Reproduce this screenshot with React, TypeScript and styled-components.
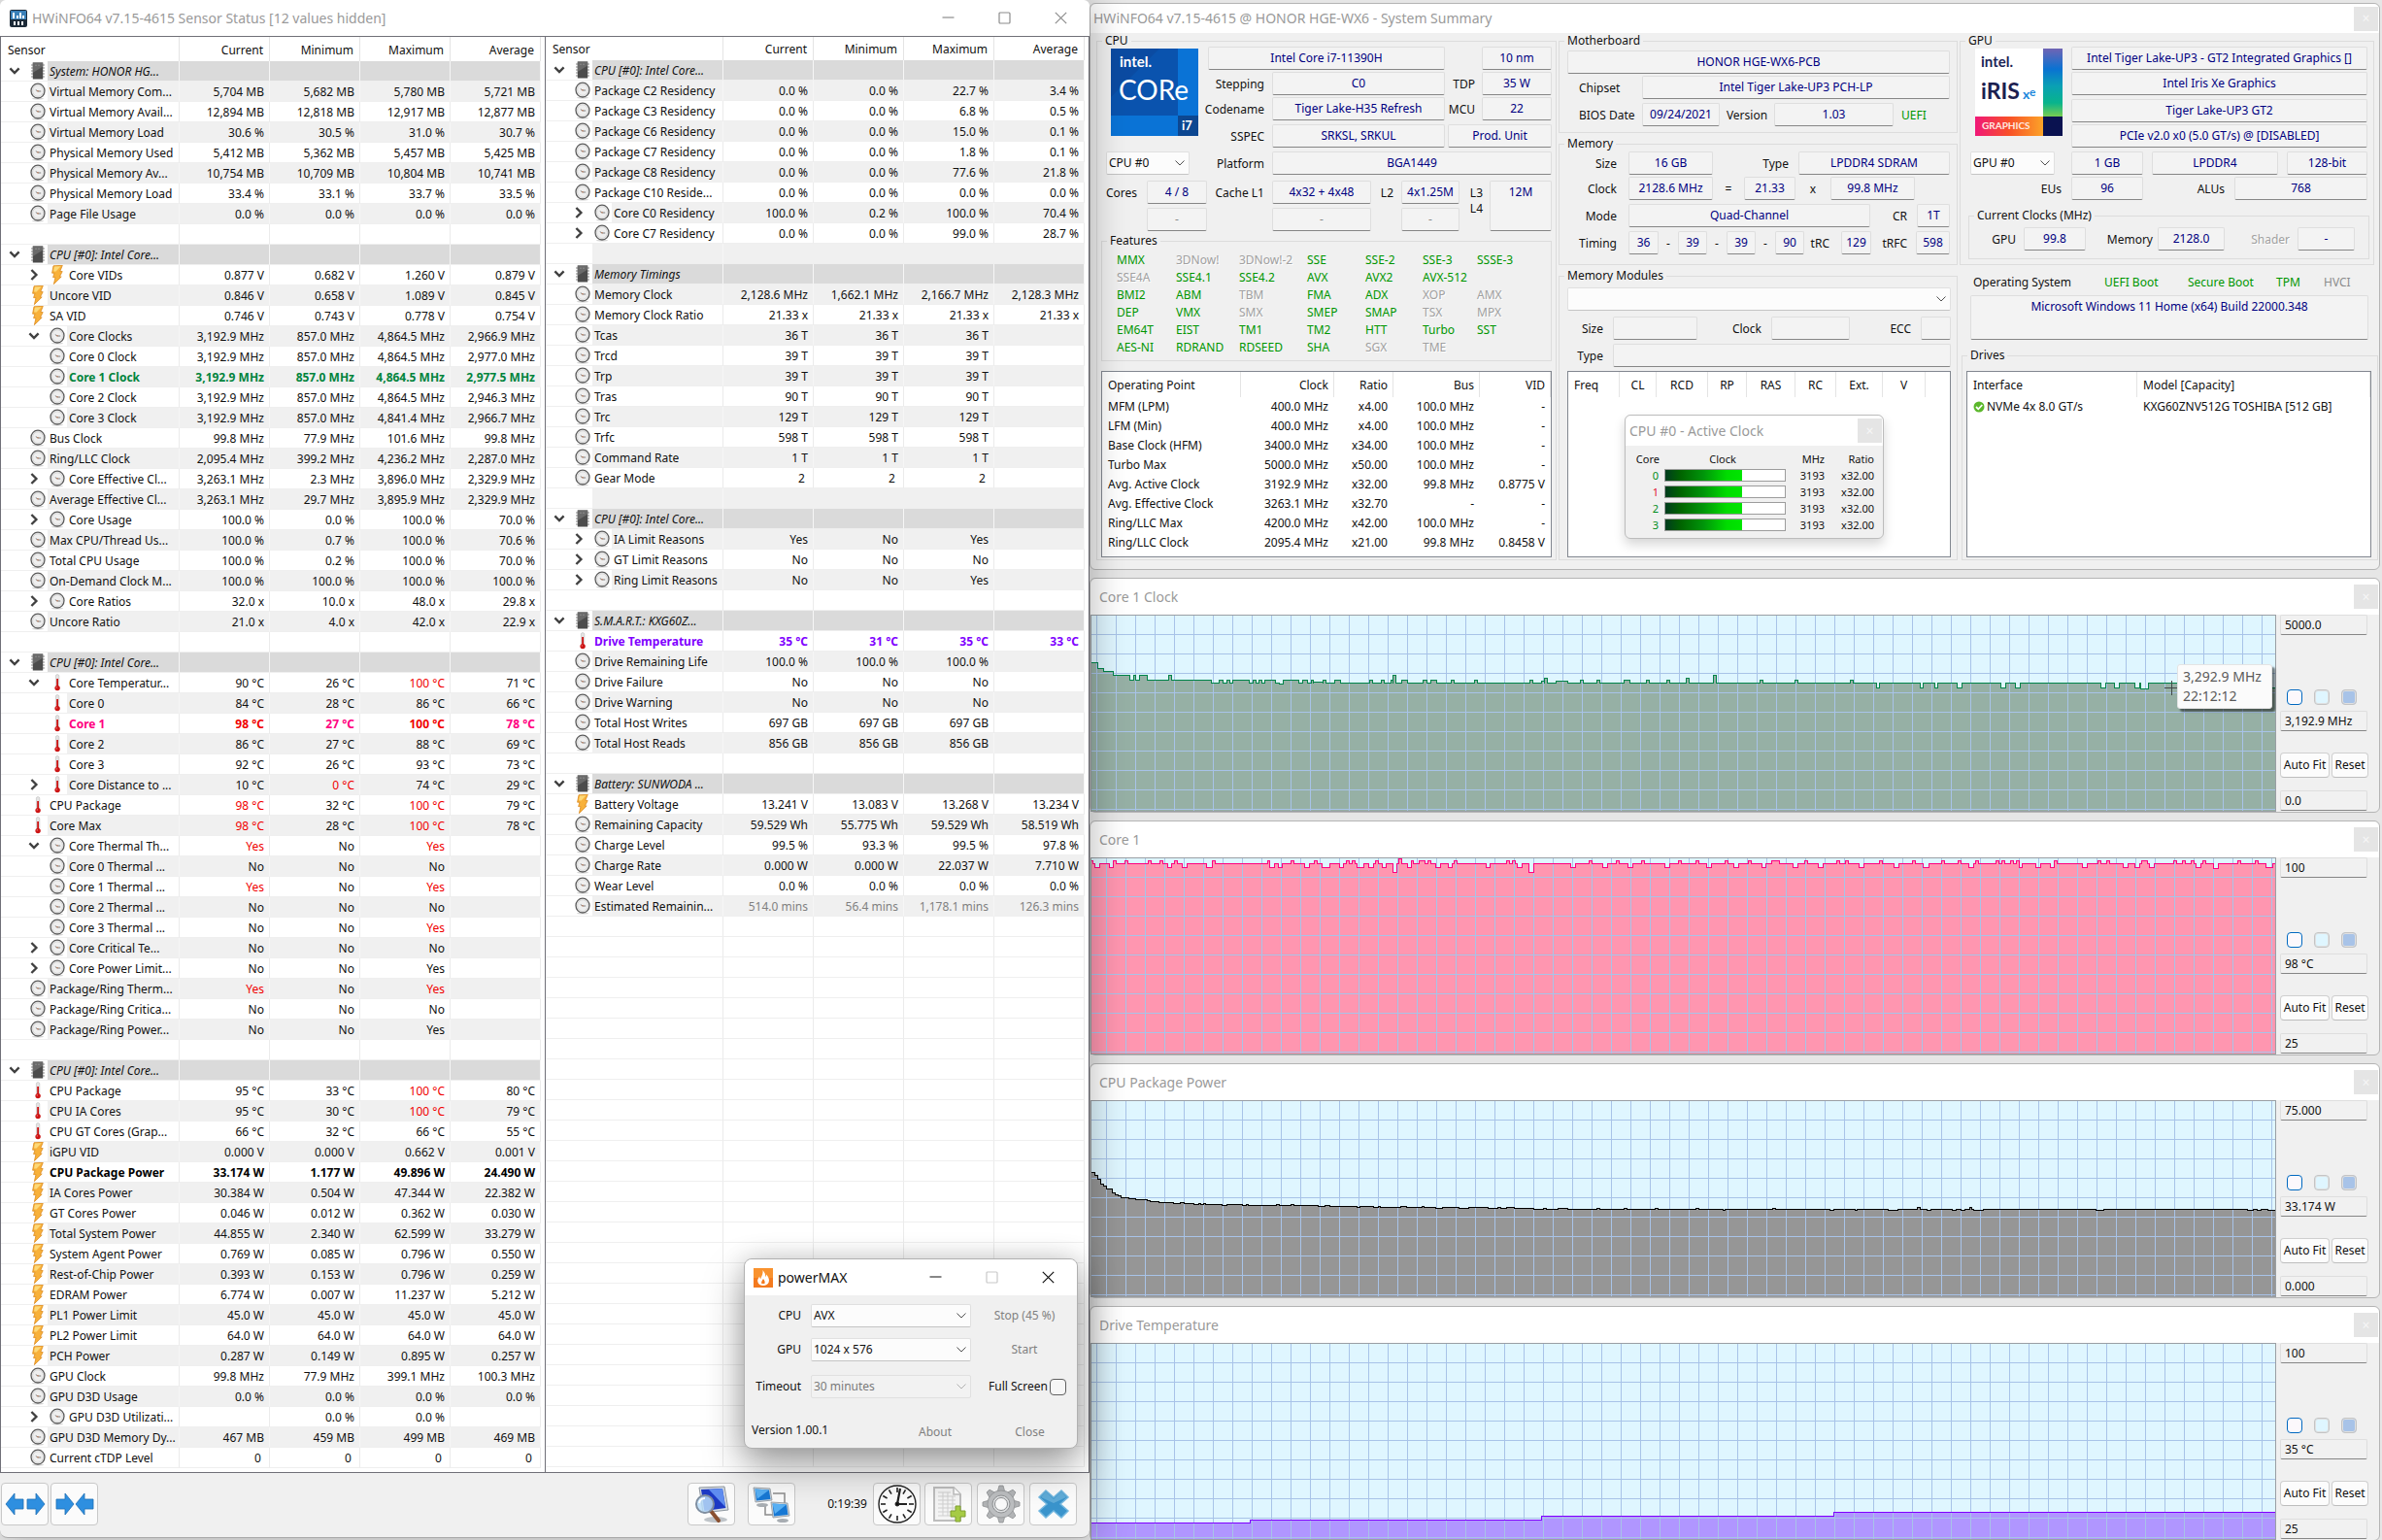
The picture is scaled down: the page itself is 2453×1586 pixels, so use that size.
import React from "react";
import styled, { createGlobalStyle, css } from "styled-components";

const INK = "#101010";
const NAVY = "#000080";
const GREEN = "#009600";
const RED = "#f00000";
const MUTED = "#a0a0a0";

const GlobalStyle = createGlobalStyle`
  * { box-sizing: border-box; }
  body {
    margin: 0;
    background: #e6e6e6;
    color: ${INK};
    font: 12px/20px "Noto Sans", "Open Sans", sans-serif;
  }
  button, input, select, output { font: inherit; color: inherit; margin: 0; }
  button { padding: 0; cursor: default; }
`;

/* ---------- desktop and window chrome ---------- */

const Desktop = styled.main`
  display: grid;
  grid-template-columns: minmax(0, 1122fr) minmax(0, 1329fr);
  align-items: start;
  padding-right: 2px;
  height: 100vh;
  overflow: hidden;
`;

const SensorWindow = styled.section`
  position: relative;
  z-index: 1;
  background: #f0f0f0;
  border-radius: 8px;
  border-bottom: 1px solid #a8a8a8;
  box-shadow: 4px 0 36px rgba(0, 0, 0, 0.26);
`;

const RightColumn = styled.div`
  display: flex;
  flex-direction: column;
  gap: 8px;
  padding-top: 3px;
`;

const ToolWindow = styled.section`
  border: 1px solid #b4b4b4;
  border-radius: 6px;
  background: #f0f0f0;
`;

const TitleBar = styled.header<{ $h: number; $pad: number }>`
  display: flex;
  align-items: center;
  height: ${(p) => p.$h}px;
  padding: 0 1px 0 ${(p) => p.$pad}px;
  background: #fff;
  border-radius: 6px 6px 0 0;
`;

const Title = styled.h2<{ $dark?: boolean }>`
  flex: 1;
  margin: 0;
  font-size: 14px;
  font-weight: 400;
  white-space: nowrap;
  color: ${(p) => (p.$dark ? "#111" : "#9a9a9a")};
`;

const FadedClose = styled.button`
  width: 25px;
  height: 25px;
  border: 0;
  background: #e5e5e5;
  color: #f6f6f6;
  font-size: 14px;
  line-height: 22px;
`;

const Caption = styled.button<{ $w: number }>`
  display: grid;
  place-items: center;
  width: ${(p) => p.$w}px;
  height: 30px;
  border: 0;
  background: none;
`;

type CaptionKind = "min" | "max" | "close";
const CaptionGlyph = ({ kind, color }: { kind: CaptionKind; color: string }) => (
  <svg width="13" height="13" viewBox="0 0 13 13" fill="none" stroke={color} strokeWidth="1.2">
    {kind === "min" && <path d="M.5 6h12" />}
    {kind === "max" && <rect x="1" y="1" width="11" height="11" rx="1" />}
    {kind === "close" && <path d="M.8.8l11.4 11.4M12.2.8L.8 12.2" />}
  </svg>
);

/* ---------- sensor icons ---------- */

type IconKind = "gauge" | "bolt" | "temp" | "chip";

const SensorIcon = ({ kind }: { kind: IconKind }) => {
  if (kind === "gauge")
    return (
      <svg width="16" height="18" viewBox="0 0 16 18">
        <ellipse cx="8" cy="16.6" rx="6" ry="1" fill="#d4d4d4" />
        <ellipse cx="8" cy="8.6" rx="7" ry="7.4" fill="#efefef" stroke="#5c5c5c" strokeWidth="1.3" />
        <ellipse cx="8" cy="8.6" rx="5.4" ry="5.8" fill="none" stroke="#d0d0d0" strokeWidth=".8" />
        <path d="M5.8 7.6L8 9h3.2" stroke="#707070" strokeWidth=".9" fill="none" />
        <circle cx="8" cy="8.8" r=".7" fill="#c87850" />
      </svg>
    );
  if (kind === "bolt")
    return (
      <svg width="12" height="20" viewBox="0 0 12 20">
        <path d="M2 .8L11.3.3 8.8 6.4l2.4.2L8.4 12h1.8L2.4 19.6 4 12.6H1.6L3 8.2H.6z" fill="#f8b13a" stroke="#dc8a1e" strokeWidth=".8" />
        <path d="M3 1.6l6.6-.3-5 5.2H2z" fill="#fdd978" />
      </svg>
    );
  if (kind === "temp")
    return (
      <svg width="8" height="18" viewBox="0 0 8 18">
        <rect x="2.4" y=".6" width="3.4" height="12.6" rx="1.6" fill="#e4e4e4" stroke="#bdbdbd" strokeWidth=".6" />
        <path d="M4.1 5v8" stroke="#cc1414" strokeWidth="1.8" />
        <circle cx="4.1" cy="14.6" r="2.7" fill="#cc1414" />
        <circle cx="3.3" cy="13.9" r=".7" fill="#f08080" />
      </svg>
    );
  return (
    <svg width="14" height="18" viewBox="0 0 14 18">
      <path d="M0 3h14M0 6h14M0 9h14M0 12h14M0 15h14" stroke="#8a8a8a" strokeWidth="1.2" />
      <rect x="1.8" y=".5" width="10.4" height="17" fill="#4c4c4c" />
      <path d="M1.8.5h10.4v4L1.8 11z" fill="#6a6a6a" />
      <path d="M4 3.2h6" stroke="#8c8c8c" strokeDasharray="2 1" />
    </svg>
  );
};

const Expander = ({ open }: { open: boolean }) => (
  <svg width="12" height="12" viewBox="0 0 12 12" fill="none" stroke="#404040" strokeWidth="2.4">
    {open ? <path d="M1.4 3.4L6 8l4.6-4.6" /> : <path d="M3.4 1L8.4 6l-5 5" />}
  </svg>
);

/* ---------- sensor tables ---------- */

type Tone = "green" | "pink" | "black" | "purple" | "dim";
type Row = {
  icon?: IconKind;
  level?: 0 | 1;
  open?: boolean;
  head?: boolean;
  name?: string;
  vals?: string[];
  tone?: Tone;
};

const toneColor: Record<Tone, string> = {
  green: "#00843c",
  pink: "#ff0080",
  black: "#000",
  purple: "#8000ff",
  dim: INK,
};

const head = (name: string): Row => ({ icon: "chip", head: true, open: true, name });
const blank: Row = {};
const row = (icon: IconKind, name: string, vals: string, extra: Partial<Row> = {}): Row => ({
  icon,
  name,
  vals: vals.split("|"),
  ...extra,
});
const sub: Partial<Row> = { level: 1 };
const shut: Partial<Row> = { level: 1, open: false };
const wide: Partial<Row> = { level: 1, open: true };

/* A leading "!" marks a reading beyond its limit. */
const leftRows: Row[] = [
  head("System: HONOR HG..."),
  row("gauge", "Virtual Memory Com...", "5,704 MB|5,682 MB|5,780 MB|5,721 MB"),
  row("gauge", "Virtual Memory Avail...", "12,894 MB|12,818 MB|12,917 MB|12,877 MB"),
  row("gauge", "Virtual Memory Load", "30.6 %|30.5 %|31.0 %|30.7 %"),
  row("gauge", "Physical Memory Used", "5,412 MB|5,362 MB|5,457 MB|5,425 MB"),
  row("gauge", "Physical Memory Av...", "10,754 MB|10,709 MB|10,804 MB|10,741 MB"),
  row("gauge", "Physical Memory Load", "33.4 %|33.1 %|33.7 %|33.5 %"),
  row("gauge", "Page File Usage", "0.0 %|0.0 %|0.0 %|0.0 %"),
  blank,
  head("CPU [#0]: Intel Core..."),
  row("bolt", "Core VIDs", "0.877 V|0.682 V|1.260 V|0.879 V", shut),
  row("bolt", "Uncore VID", "0.846 V|0.658 V|1.089 V|0.845 V"),
  row("bolt", "SA VID", "0.746 V|0.743 V|0.778 V|0.754 V"),
  row("gauge", "Core Clocks", "3,192.9 MHz|857.0 MHz|4,864.5 MHz|2,966.9 MHz", wide),
  row("gauge", "Core 0 Clock", "3,192.9 MHz|857.0 MHz|4,864.5 MHz|2,977.0 MHz", sub),
  row("gauge", "Core 1 Clock", "3,192.9 MHz|857.0 MHz|4,864.5 MHz|2,977.5 MHz", { level: 1, tone: "green" }),
  row("gauge", "Core 2 Clock", "3,192.9 MHz|857.0 MHz|4,864.5 MHz|2,946.3 MHz", sub),
  row("gauge", "Core 3 Clock", "3,192.9 MHz|857.0 MHz|4,841.4 MHz|2,966.7 MHz", sub),
  row("gauge", "Bus Clock", "99.8 MHz|77.9 MHz|101.6 MHz|99.8 MHz"),
  row("gauge", "Ring/LLC Clock", "2,095.4 MHz|399.2 MHz|4,236.2 MHz|2,287.0 MHz"),
  row("gauge", "Core Effective Cl...", "3,263.1 MHz|2.3 MHz|3,896.0 MHz|2,329.9 MHz", shut),
  row("gauge", "Average Effective Cl...", "3,263.1 MHz|29.7 MHz|3,895.9 MHz|2,329.9 MHz"),
  row("gauge", "Core Usage", "100.0 %|0.0 %|100.0 %|70.0 %", shut),
  row("gauge", "Max CPU/Thread Us...", "100.0 %|0.7 %|100.0 %|70.6 %"),
  row("gauge", "Total CPU Usage", "100.0 %|0.2 %|100.0 %|70.0 %"),
  row("gauge", "On-Demand Clock M...", "100.0 %|100.0 %|100.0 %|100.0 %"),
  row("gauge", "Core Ratios", "32.0 x|10.0 x|48.0 x|29.8 x", shut),
  row("gauge", "Uncore Ratio", "21.0 x|4.0 x|42.0 x|22.9 x"),
  blank,
  head("CPU [#0]: Intel Core..."),
  row("temp", "Core Temperatur...", "90 °C|26 °C|!100 °C|71 °C", wide),
  row("temp", "Core 0", "84 °C|28 °C|86 °C|66 °C", sub),
  row("temp", "Core 1", "!98 °C|27 °C|!100 °C|78 °C", { level: 1, tone: "pink" }),
  row("temp", "Core 2", "86 °C|27 °C|88 °C|69 °C", sub),
  row("temp", "Core 3", "92 °C|26 °C|93 °C|73 °C", sub),
  row("temp", "Core Distance to ...", "10 °C|!0 °C|74 °C|29 °C", shut),
  row("temp", "CPU Package", "!98 °C|32 °C|!100 °C|79 °C"),
  row("temp", "Core Max", "!98 °C|28 °C|!100 °C|78 °C"),
  row("gauge", "Core Thermal Th...", "!Yes|No|!Yes|", wide),
  row("gauge", "Core 0 Thermal ...", "No|No|No|", sub),
  row("gauge", "Core 1 Thermal ...", "!Yes|No|!Yes|", sub),
  row("gauge", "Core 2 Thermal ...", "No|No|No|", sub),
  row("gauge", "Core 3 Thermal ...", "No|No|!Yes|", sub),
  row("gauge", "Core Critical Te...", "No|No|No|", shut),
  row("gauge", "Core Power Limit...", "No|No|Yes|", shut),
  row("gauge", "Package/Ring Therm...", "!Yes|No|!Yes|"),
  row("gauge", "Package/Ring Critica...", "No|No|No|"),
  row("gauge", "Package/Ring Power...", "No|No|Yes|"),
  blank,
  head("CPU [#0]: Intel Core..."),
  row("temp", "CPU Package", "95 °C|33 °C|!100 °C|80 °C"),
  row("temp", "CPU IA Cores", "95 °C|30 °C|!100 °C|79 °C"),
  row("temp", "CPU GT Cores (Grap...", "66 °C|32 °C|66 °C|55 °C"),
  row("bolt", "iGPU VID", "0.000 V|0.000 V|0.662 V|0.001 V"),
  row("bolt", "CPU Package Power", "33.174 W|1.177 W|49.896 W|24.490 W", { tone: "black" }),
  row("bolt", "IA Cores Power", "30.384 W|0.504 W|47.344 W|22.382 W"),
  row("bolt", "GT Cores Power", "0.046 W|0.012 W|0.362 W|0.030 W"),
  row("bolt", "Total System Power", "44.855 W|2.340 W|62.599 W|33.279 W"),
  row("bolt", "System Agent Power", "0.769 W|0.085 W|0.796 W|0.550 W"),
  row("bolt", "Rest-of-Chip Power", "0.393 W|0.153 W|0.796 W|0.259 W"),
  row("bolt", "EDRAM Power", "6.774 W|0.007 W|11.237 W|5.212 W"),
  row("bolt", "PL1 Power Limit", "45.0 W|45.0 W|45.0 W|45.0 W"),
  row("bolt", "PL2 Power Limit", "64.0 W|64.0 W|64.0 W|64.0 W"),
  row("bolt", "PCH Power", "0.287 W|0.149 W|0.895 W|0.257 W"),
  row("gauge", "GPU Clock", "99.8 MHz|77.9 MHz|399.1 MHz|100.3 MHz"),
  row("gauge", "GPU D3D Usage", "0.0 %|0.0 %|0.0 %|0.0 %"),
  row("gauge", "GPU D3D Utilizati...", "|0.0 %|0.0 %|", shut),
  row("gauge", "GPU D3D Memory Dy...", "467 MB|459 MB|499 MB|469 MB"),
  row("gauge", "Current cTDP Level", "0 |0 |0 |0 "),
];

const rightRows: Row[] = [
  head("CPU [#0]: Intel Core..."),
  row("gauge", "Package C2 Residency", "0.0 %|0.0 %|22.7 %|3.4 %"),
  row("gauge", "Package C3 Residency", "0.0 %|0.0 %|6.8 %|0.5 %"),
  row("gauge", "Package C6 Residency", "0.0 %|0.0 %|15.0 %|0.1 %"),
  row("gauge", "Package C7 Residency", "0.0 %|0.0 %|1.8 %|0.1 %"),
  row("gauge", "Package C8 Residency", "0.0 %|0.0 %|77.6 %|21.8 %"),
  row("gauge", "Package C10 Reside...", "0.0 %|0.0 %|0.0 %|0.0 %"),
  row("gauge", "Core C0 Residency", "100.0 %|0.2 %|100.0 %|70.4 %", shut),
  row("gauge", "Core C7 Residency", "0.0 %|0.0 %|99.0 %|28.7 %", shut),
  blank,
  head("Memory Timings"),
  row("gauge", "Memory Clock", "2,128.6 MHz|1,662.1 MHz|2,166.7 MHz|2,128.3 MHz"),
  row("gauge", "Memory Clock Ratio", "21.33 x|21.33 x|21.33 x|21.33 x"),
  row("gauge", "Tcas", "36 T|36 T|36 T|"),
  row("gauge", "Trcd", "39 T|39 T|39 T|"),
  row("gauge", "Trp", "39 T|39 T|39 T|"),
  row("gauge", "Tras", "90 T|90 T|90 T|"),
  row("gauge", "Trc", "129 T|129 T|129 T|"),
  row("gauge", "Trfc", "598 T|598 T|598 T|"),
  row("gauge", "Command Rate", "1 T|1 T|1 T|"),
  row("gauge", "Gear Mode", "2 |2 |2 |"),
  blank,
  head("CPU [#0]: Intel Core..."),
  row("gauge", "IA Limit Reasons", "Yes|No|Yes|", shut),
  row("gauge", "GT Limit Reasons", "No|No|No|", shut),
  row("gauge", "Ring Limit Reasons", "No|No|Yes|", shut),
  blank,
  head("S.M.A.R.T.: KXG60Z..."),
  row("temp", "Drive Temperature", "35 °C|31 °C|35 °C|33 °C", { tone: "purple" }),
  row("gauge", "Drive Remaining Life", "100.0 %|100.0 %|100.0 %|"),
  row("gauge", "Drive Failure", "No|No|No|"),
  row("gauge", "Drive Warning", "No|No|No|"),
  row("gauge", "Total Host Writes", "697 GB|697 GB|697 GB|"),
  row("gauge", "Total Host Reads", "856 GB|856 GB|856 GB|"),
  blank,
  head("Battery: SUNWODA ..."),
  row("bolt", "Battery Voltage", "13.241 V|13.083 V|13.268 V|13.234 V"),
  row("gauge", "Remaining Capacity", "59.529 Wh|55.775 Wh|59.529 Wh|58.519 Wh"),
  row("gauge", "Charge Level", "99.5 %|93.3 %|99.5 %|97.8 %"),
  row("gauge", "Charge Rate", "0.000 W|0.000 W|22.037 W|7.710 W"),
  row("gauge", "Wear Level", "0.0 %|0.0 %|0.0 %|0.0 %"),
  row("gauge", "Estimated Remainin...", "514.0 mins|56.4 mins|1,178.1 mins|126.3 mins", { tone: "dim" }),
];
const contentLength = rightRows.length;
const paddedRightRows = [...rightRows, ...Array.from({ length: leftRows.length - contentLength }, () => blank)];

const TablePair = styled.div`
  display: grid;
  grid-template-columns: 1fr 1fr;
  border-top: 1px solid #707078;
  border-bottom: 1px solid #707078;
`;

const TableBox = styled.div`
  padding: 0 4px 4px 0;
  background: #fff;
  border-left: 1px solid #707078;
  &:last-child { border-right: 1px solid #606068; }
`;

const SensorTable = styled.table`
  width: 100%;
  table-layout: fixed;
  border-collapse: separate;
  border-spacing: 0;
`;

const NameCol = styled.col``;
const ValueCol = styled.col`
  width: 93px;
`;

const HeadCell = styled.th<{ $first?: boolean; $h: number }>`
  height: ${(p) => p.$h}px;
  padding: 2px 6px 0 7px;
  border-right: 1px solid #e4e4e4;
  font-weight: 400;
  text-align: ${(p) => (p.$first ? "left" : "right")};
`;

type Shade = "head" | "odd" | "even";
const shadeBg: Record<Shade, string> = { head: "#dadada", odd: "#f0f0f0", even: "#fff" };

const ValueCell = styled.td<{ $shade: Shade; $plain?: boolean; $color?: string; $bold?: boolean }>`
  height: 21px;
  padding: 2px 5px 0 0;
  border-right: 1px solid ${(p) => (p.$plain ? "#f0f0f0" : p.$shade === "even" ? "#ebebeb" : "#f6f6f6")};
  border-bottom: 1px solid #efefef;
  background: ${(p) => shadeBg[p.$shade]};
  color: ${(p) => p.$color ?? "inherit"};
  font-weight: ${(p) => (p.$bold ? 700 : 400)};
  text-align: right;
  white-space: pre;
  line-height: 18px;
`;

const NameCell = styled.td<{ $shade: Shade }>`
  height: 21px;
  padding: 0;
  border-right: 1px solid ${(p) => (p.$shade === "even" ? "#ebebeb" : "#f6f6f6")};
  border-bottom: 1px solid #efefef;
`;

const NameLine = styled.div<{ $level: number }>`
  display: flex;
  align-items: center;
  height: 20px;
  padding-left: ${(p) => 4 + p.$level * 20}px;
`;

const Toggle = styled.button`
  display: grid;
  place-items: center;
  width: 20px;
  height: 20px;
  border: 0;
  background: none;
`;

const ToggleGap = styled.span<{ $w: number }>`
  width: ${(p) => p.$w}px;
`;

const IconSlot = styled.span`
  display: grid;
  place-items: center;
  width: 18px;
  height: 20px;
`;

const NameText = styled.span<{ $shade: Shade; $color?: string; $bold?: boolean }>`
  flex: 1;
  height: 20px;
  margin-left: 1px;
  padding-left: 2px;
  overflow: hidden;
  white-space: nowrap;
  line-height: 22px;
  background: ${(p) => shadeBg[p.$shade]};
  color: ${(p) => p.$color ?? "inherit"};
  font-weight: ${(p) => (p.$bold ? 700 : 400)};
  font-style: ${(p) => (p.$shade === "head" ? "italic" : "normal")};
`;

const SensorList = ({ rows, headHeight, used }: { rows: Row[]; headHeight: number; used: number }) => (
  <SensorTable>
    <colgroup>
      <NameCol />
      <ValueCol />
      <ValueCol />
      <ValueCol />
      <ValueCol />
    </colgroup>
    <thead>
      <tr>
        {["Sensor", "Current", "Minimum", "Maximum", "Average"].map((h, i) => (
          <HeadCell key={h} $first={i === 0} $h={headHeight}>
            {h}
          </HeadCell>
        ))}
      </tr>
    </thead>
    <tbody>
      {rows.map((r, i) => {
        const shade: Shade = r.head ? "head" : i % 2 && i < used ? "odd" : "even";
        const bold = !!r.tone && r.tone !== "dim";
        const color = r.tone ? toneColor[r.tone] : undefined;
        const level = r.level ?? 0;
        const plain = !r.name && shade === "odd";
        return (
          <tr key={i}>
            <NameCell $shade={shade}>
              <NameLine $level={level}>
                {r.open !== undefined ? (
                  <Toggle aria-label={r.open ? "Collapse" : "Expand"}>
                    <Expander open={r.open} />
                  </Toggle>
                ) : (
                  <ToggleGap $w={20} />
                )}
                <ToggleGap $w={5} />
                <IconSlot>{r.icon && <SensorIcon kind={r.icon} />}</IconSlot>
                <NameText $shade={shade} $bold={bold} $color={color}>
                  {r.name}
                </NameText>
              </NameLine>
            </NameCell>
            {[0, 1, 2, 3].map((c) => {
              const v = r.vals?.[c] ?? "";
              const hot = v.startsWith("!");
              return (
                <ValueCell
                  key={c}
                  $shade={shade}
                  $plain={plain}
                  $bold={bold}
                  $color={hot ? RED : r.tone === "dim" ? "#808080" : color}
                >
                  {hot ? v.slice(1) : v}
                </ValueCell>
              );
            })}
          </tr>
        );
      })}
    </tbody>
  </SensorTable>
);

/* ---------- bottom toolbar ---------- */

const Toolbar = styled.footer`
  display: flex;
  align-items: center;
  height: 66px;
  padding: 0 13px 3px 1px;
`;

const ToolButton = styled.button<{ $ml?: number }>`
  display: grid;
  place-items: center;
  width: 49px;
  height: 44px;
  margin-left: ${(p) => p.$ml ?? 0}px;
  border: 1px solid #c8c8c8;
  border-radius: 4px;
  background: #fbfbfb;
`;

const Spring = styled.span`
  flex: 1;
`;

const Uptime = styled.time`
  width: 80px;
  padding-right: 6px;
  text-align: right;
`;

const ArrowsOut = () => (
  <svg width="42" height="26" viewBox="0 0 42 26" fill="#2e8fe0" stroke="#1f6fb4" strokeWidth=".8">
    <path d="M1 13L10 2v6h9v10h-9v6zM41 13L32 2v6h-9v10h9v6z" />
  </svg>
);
const ArrowsIn = () => (
  <svg width="42" height="26" viewBox="0 0 42 26" fill="#2e8fe0" stroke="#1f6fb4" strokeWidth=".8">
    <path d="M20 13L11 2v6H2v10h9v6zM22 13L31 2v6h9v10h-9v6z" />
  </svg>
);
const SearchScreen = () => (
  <svg width="42" height="40" viewBox="0 0 42 40">
    <ellipse cx="25" cy="36" rx="12" ry="3" fill="#bfc4c9" />
    <path d="M8 3l26-1 4 24-26 3z" fill="#d5dbe1" stroke="#8f979f" />
    <path d="M10 5l22-1 3.400 20-22 3z" fill="#1c39c4" />
    <path d="M18 5l14-1 3 19z" fill="#5f8df0" />
    <path d="M20 27l8 10" stroke="#8a5030" strokeWidth="4" strokeLinecap="round" />
    <circle cx="14" cy="20" r="9" fill="#b8dcf8" fillOpacity=".85" stroke="#7f8ea0" strokeWidth="2" />
    <path d="M8 19a6 6 0 016-5" stroke="#fff" strokeWidth="2" fill="none" />
  </svg>
);
const LinkedScreens = () => (
  <svg width="42" height="40" viewBox="0 0 42 40">
    <path d="M22 9h12v12M14 22v9h10" fill="none" stroke="#8c8c8c" strokeWidth="1.5" />
    <ellipse cx="11" cy="21" rx="6" ry="2" fill="#a8adb2" />
    <path d="M2 3l17 1 2 12-17 2z" fill="#cfd6dc" stroke="#8b939b" strokeWidth=".8" />
    <path d="M3.500 4.500l14.500 1 1.500 9.500-14.500 1.500z" fill="#1778d4" />
    <path d="M3.500 4.500l14.500 1-12 9z" fill="#58b0f4" />
    <ellipse cx="32" cy="37" rx="6" ry="2" fill="#a8adb2" />
    <path d="M20 18l17 1 2 13-17 2z" fill="#cfd6dc" stroke="#8b939b" strokeWidth=".8" />
    <path d="M21.500 19.500l14.500 1 1.500 10.500-14.500 1.500z" fill="#1778d4" />
    <path d="M21.500 19.500l14.500 1-12 9.500z" fill="#58b0f4" />
  </svg>
);
const ClockFace = () => (
  <svg width="42" height="42" viewBox="0 0 42 42" stroke="#222" fill="none">
    <circle cx="21" cy="21" r="19" fill="#fdfdfd" strokeWidth="1.400" />
    {Array.from({ length: 12 }, (_, i) => (
      <path key={i} d="M21 4v5" strokeWidth="1.600" transform={`rotate(${i * 30} 21 21)`} />
    ))}
    <path d="M21 21L24 5M20 21h11" strokeWidth="2.200" />
    <circle cx="21" cy="21" r="2" fill="#111" />
  </svg>
);
const SheetPlus = () => (
  <svg width="38" height="40" viewBox="0 0 38 40">
    <path d="M4 3h20l7 7v27H4z" fill="#f4f4f4" stroke="#bdbdbd" strokeWidth="2" />
    <path d="M24 3v7h7" fill="#fff" stroke="#bdbdbd" strokeWidth="1.500" />
    <path d="M8 8h13M8 12h18M8 16h18M8 20h18M8 24h18M8 28h14M8 32h12M13 8v24M18 8v24M23 12v16" stroke="#cfcfcf" />
    <path d="M26 22h5v5h5v6h-5v5h-5v-5h-5v-6h5z" fill="#a6cb45" stroke="#7f9f30" />
  </svg>
);
const Gear = () => (
  <svg width="42" height="42" viewBox="0 0 42 42">
    {Array.from({ length: 8 }, (_, i) => (
      <path key={i} d="M17 9l2-7h4l2 7z" fill="#b2b4b6" stroke="#8e9092" strokeWidth=".8" transform={`rotate(${i * 45} 21 21)`} />
    ))}
    <circle cx="21" cy="21" r="14" fill="#bcbec0" stroke="#9a9c9e" />
    <circle cx="21" cy="21" r="9" fill="#dcdedf" stroke="#909294" />
    <circle cx="21" cy="21" r="6.500" fill="#fbfbfb" stroke="#8a8c8e" />
  </svg>
);
const BlueCross = () => (
  <svg width="34" height="32" viewBox="0 0 34 32">
    <path d="M9 2l8 7 8-7 7 7-8 7 8 7-7 7-8-7-8 7-7-7 8-7-8-7z" fill="#3a94cc" stroke="#74b8e0" strokeWidth="1.500" />
    <path d="M9 3l8 8 8-8 5 6-13 6L4 9z" fill="#60acd8" />
  </svg>
);

/* ---------- form parts ---------- */

const SelectWrap = styled.span<{ $w?: number; $off?: boolean }>`
  display: grid;
  align-items: center;
  ${(p) => (p.$w ? css`width: ${p.$w}px;` : css`flex: 1;`)}
  color: ${(p) => (p.$off ? "#7a7a7a" : INK)};
  > * { grid-area: 1 / 1; }
  > svg { justify-self: end; margin-right: 5px; pointer-events: none; }
`;

const SelectBox = styled.select<{ $off?: boolean }>`
  width: 100%;
  height: 24px;
  padding: 0 22px 0 2px;
  appearance: none;
  border: 1px solid #e0e0e0;
  border-bottom-color: ${(p) => (p.$off ? "#e0e0e0" : "#c4c4c4")};
  border-radius: 2px;
  background: ${(p) => (p.$off ? "#f2f2f2" : "#fcfcfc")};
  opacity: 1;
`;

const DropDown = ({ label, value, w, off }: { label: string; value: string; w?: number; off?: boolean }) => (
  <SelectWrap $w={w} $off={off}>
    <SelectBox aria-label={label} id={`pick-${label}`} defaultValue={value} $off={off} disabled={off}>
      <option value={value}>{value}</option>
    </SelectBox>
    <svg width="10" height="6" viewBox="0 0 10 6" fill="none" stroke={off ? "#b0b0b0" : "#505050"}>
      <path d="M.5.5L5 5 9.500.5" />
    </svg>
  </SelectWrap>
);

/* ---------- powerMAX dialog ---------- */

const Dialog = styled.section`
  position: absolute;
  right: 12px;
  bottom: 91px;
  width: 344px;
  overflow: hidden;
  border: 1px solid #b0b0b0;
  border-radius: 8px;
  background: #f0f0f0;
  box-shadow: 0 18px 40px rgba(0, 0, 0, 0.36), 0 0 26px rgba(0, 0, 0, 0.14);
`;

const DialogGrid = styled.div`
  display: grid;
  grid-template-columns: 58px 165px 1fr;
  column-gap: 10px;
  align-items: center;
  padding-right: 9px;
  grid-template-rows: 42px 27px 50px;
`;

const DialogLabel = styled.label`
  text-align: right;
`;

const FlatButton = styled.button`
  border: 0;
  background: none;
  color: #808080;
`;

const CheckRow = styled.label`
  display: flex;
  align-items: center;
  justify-content: flex-end;
  gap: 2px;
  padding-right: 2px;
`;

const Check = styled.input`
  width: 17px;
  height: 17px;
  margin: 0;
  appearance: none;
  border: 1px solid #606060;
  border-radius: 4px;
  background: #f6f6f6;
`;

const DialogFoot = styled.div`
  display: grid;
  grid-template-columns: 1fr 98px 97px;
  height: 38px;
  padding: 5px 0 0 7px;
`;

const VersionText = styled.span`
  padding-top: 5px;
`;

const FlameLogo = () => (
  <svg width="20" height="20" viewBox="0 0 20 20">
    <rect width="20" height="20" fill="#f47a1e" />
    <rect width="20" height="10" fill="#f9922e" />
    <path d="M9.500 2c2 3 3 4 2.600 7 .8-.5 1-1.500 1-2.500 2 2.200 3.600 5 2.600 8-.8 2.200-3 3.500-5.700 3.500s-5.200-1.500-5.700-4c-.5-2.400.9-4 2-5.500 0 1.200.2 2 .9 2.600C8.600 8 10 5.500 9.500 2z" fill="#fff" />
    <path d="M10 11c1.500 2 2 3 1.400 5H8.300c-.6-2 .6-3 1.700-5z" fill="#f47a1e" />
  </svg>
);

const TitleIcon = styled.span`
  display: grid;
  margin-right: 5px;
`;

const PowerMax = () => (
  <Dialog aria-label="powerMAX">
    <TitleBar $h={37} $pad={9}>
      <TitleIcon>
        <FlameLogo />
      </TitleIcon>
      <Title $dark>powerMAX</Title>
      <Caption $w={58} aria-label="Minimize">
        <CaptionGlyph kind="min" color="#111" />
      </Caption>
      <Caption $w={58} aria-label="Maximize" disabled>
        <CaptionGlyph kind="max" color="#c8c8c8" />
      </Caption>
      <Caption $w={58} aria-label="Close window">
        <CaptionGlyph kind="close" color="#111" />
      </Caption>
    </TitleBar>
    <DialogGrid>
      <DialogLabel htmlFor="pick-Load">CPU</DialogLabel>
      <DropDown label="Load" value="AVX" w={165} />
      <FlatButton>Stop (45 %)</FlatButton>
      <DialogLabel htmlFor="pick-Resolution">GPU</DialogLabel>
      <DropDown label="Resolution" value="1024 x 576" w={165} />
      <FlatButton>Start</FlatButton>
      <DialogLabel htmlFor="pick-Timeout">Timeout</DialogLabel>
      <DropDown label="Timeout" value="30 minutes" w={165} off />
      <CheckRow>
        Full Screen
        <Check type="checkbox" />
      </CheckRow>
    </DialogGrid>
    <DialogFoot>
      <VersionText>Version 1.00.1</VersionText>
      <FlatButton>About</FlatButton>
      <FlatButton>Close</FlatButton>
    </DialogFoot>
  </Dialog>
);

/* ---------- system summary ---------- */

const SummaryBody = styled.div`
  display: grid;
  grid-template-columns: minmax(0, 474fr) minmax(0, 411fr) minmax(0, 431fr);
  gap: 2px;
  padding: 2px 1px 9px 6px;
`;

const Column = styled.div`
  display: flex;
  flex-direction: column;
`;

const Group = styled.fieldset<{ $pad: string; $mt?: number; $mr?: number; $ml?: number; $grow?: boolean }>`
  min-width: 0;
  margin: ${(p) => p.$mt ?? 0}px ${(p) => p.$mr ?? 0}px 0 ${(p) => p.$ml ?? 0}px;
  padding: ${(p) => p.$pad};
  border: 1px solid #dcdcdc;
  ${(p) => p.$grow && css`flex: 1;`}
`;

const Legend = styled.legend<{ $out?: boolean }>`
  margin-left: ${(p) => (p.$out ? -3 : 1)}px;
  padding: 0 3px;
  line-height: 12px;
`;

const Line = styled.div<{ $mt?: number; $pl?: number; $pr?: number }>`
  display: flex;
  align-items: flex-start;
  margin-top: ${(p) => p.$mt ?? 0}px;
  padding-left: ${(p) => p.$pl ?? 0}px;
  padding-right: ${(p) => p.$pr ?? 0}px;
`;

const Label = styled.span<{ $w?: number; $pad?: number; $align?: string; $color?: string; $off?: boolean }>`
  flex: none;
  width: ${(p) => p.$w}px;
  padding: 0 ${(p) => (p.$align ? 0 : p.$pad ?? 8)}px 0 ${(p) => (p.$align === "left" ? p.$pad ?? 0 : 0)}px;
  line-height: 26px;
  height: 24px;
  text-align: ${(p) => p.$align ?? "right"};
  white-space: nowrap;
  color: ${(p) => (p.$off ? MUTED : p.$color ?? "inherit")};
  ${(p) => p.$off && css`text-shadow: 1px 1px 0 #fff;`}
`;

const Field = styled.output<{ $w?: number; $ml?: number; $h?: number; $dim?: boolean }>`
  display: block;
  ${(p) => (p.$w ? css`flex: none; width: ${p.$w}px;` : css`flex: 1;`)}
  min-width: 0;
  height: ${(p) => p.$h ?? 24}px;
  margin-left: ${(p) => p.$ml ?? 0}px;
  border: 1px solid #dedede;
  border-bottom-color: #868686;
  border-radius: 2px;
  background: #f3f3f3;
  color: ${(p) => (p.$dim ? "#8a8a8a" : NAVY)};
  line-height: 22px;
  text-align: center;
  white-space: nowrap;
`;

const LogoRow = styled.div<{ $left: number; $gap: number }>`
  display: grid;
  grid-template-columns: 90px 1fr;
  column-gap: ${(p) => p.$gap}px;
  padding-left: ${(p) => p.$left}px;
  > svg { margin-top: 2px; }
`;

const CacheGrid = styled.div`
  display: grid;
  grid-template-columns: 42px 62px 67px 102px 31px 60px 31px 1fr;
  grid-template-rows: 24px 24px;
  row-gap: 4px;
  margin-top: 6px;
  padding-left: 5px;
`;

const LevelLabels = styled.span`
  grid-row: 1 / 3;
  grid-column: 7;
  padding: 5px 7px 0 0;
  text-align: right;
  line-height: 16px;
`;

const L3Slot = styled.div`
  display: flex;
  grid-row: 1 / 3;
  grid-column: 8;
`;

const FeatureGrid = styled.div`
  display: grid;
  grid-template-columns: 61px 65px 70px 60px 59px 56px 1fr;
  padding-left: 11px;
  line-height: 18px;
`;

const Feature = styled.span<{ $on: boolean }>`
  color: ${(p) => (p.$on ? GREEN : MUTED)};
  ${(p) => !p.$on && css`text-shadow: 1px 1px 0 #fff;`}
`;

const features = [
  "MMX|-3DNow!|-3DNow!-2|SSE|SSE-2|SSE-3|SSSE-3",
  "-SSE4A|SSE4.1|SSE4.2|AVX|AVX2|AVX-512|",
  "BMI2|ABM|-TBM|FMA|ADX|-XOP|-AMX",
  "DEP|VMX|-SMX|SMEP|SMAP|-TSX|-MPX",
  "EM64T|EIST|TM1|TM2|HTT|Turbo|SST",
  "AES-NI|RDRAND|RDSEED|SHA|-SGX|-TME|",
].flatMap((l) => l.split("|"));

const ListBox = styled.div<{ $mt: number }>`
  position: relative;
  height: 192px;
  margin-top: ${(p) => p.$mt}px;
  border: 1px solid #828790;
  background: #fff;
`;

const PlainTable = styled.table`
  width: 100%;
  table-layout: fixed;
  border-collapse: separate;
  border-spacing: 0;
`;

const Col = styled.col<{ $w?: number }>`
  ${(p) => p.$w && css`width: ${p.$w}px;`}
`;

const PlainHead = styled.th<{ $align: string; $open?: boolean }>`
  height: 26px;
  padding: 2px 5px 0 6px;
  border-right: ${(p) => (p.$open ? 0 : 1)}px solid #e4e4e4;
  font-weight: 400;
  text-align: ${(p) => p.$align};
  ${(p) => p.$align === "center" && css`padding: 2px 0 0;`}
`;

const PlainCell = styled.td<{ $align: string }>`
  height: 20px;
  padding: 0 6px;
  text-align: ${(p) => p.$align};
  white-space: nowrap;
`;

const operatingPoints = [
  "MFM (LPM)|400.0 MHz|x4.00|100.0 MHz|-",
  "LFM (Min)|400.0 MHz|x4.00|100.0 MHz|-",
  "Base Clock (HFM)|3400.0 MHz|x34.00|100.0 MHz|-",
  "Turbo Max|5000.0 MHz|x50.00|100.0 MHz|-",
  "Avg. Active Clock|3192.9 MHz|x32.00|99.8 MHz|0.8775 V",
  "Avg. Effective Clock|3263.1 MHz|x32.70|-|-",
  "Ring/LLC Max|4200.0 MHz|x42.00|100.0 MHz|-",
  "Ring/LLC Clock|2095.4 MHz|x21.00|99.8 MHz|0.8458 V",
].map((l) => l.split("|"));

const IntelCoreLogo = () => (
  <svg width="90" height="90" viewBox="0 0 90 90" fontFamily="Lato, sans-serif" fill="#fff">
    <rect width="90" height="90" fill="#0a53ae" />
    <rect x="69" width="21" height="69" fill="#0a73d6" />
    <rect y="69" width="69" height="21" fill="#0a73d6" />
    <rect x="69" y="69" width="21" height="21" fill="#0d4791" />
    <path d="M0 0h50L0 50z" fill="#0c4699" fillOpacity=".6" />
    <text x="9" y="19" fontSize="15" fontWeight="700">intel.</text>
    <text x="8" y="53" fontSize="28" fontWeight="400">CORe</text>
    <text x="73" y="84" fontSize="13" fontWeight="700">i7</text>
  </svg>
);

const IrisLogo = () => (
  <svg width="90" height="90" viewBox="0 0 90 90" fontFamily="Lato, sans-serif">
    <defs>
      <linearGradient id="irisSide" x1="0" y1="0" x2="0" y2="1">
        <stop offset="0" stopColor="#7064b4" />
        <stop offset=".3" stopColor="#0a72d2" />
        <stop offset=".55" stopColor="#0aa0b4" />
        <stop offset=".8" stopColor="#08b48c" />
        <stop offset="1" stopColor="#78cc50" />
      </linearGradient>
      <linearGradient id="irisFoot" x1="0" y1="0" x2="1" y2="0">
        <stop offset="0" stopColor="#f01878" />
        <stop offset=".5" stopColor="#f85028" />
        <stop offset="1" stopColor="#fca428" />
      </linearGradient>
    </defs>
    <rect width="70" height="70" fill="#fff" />
    <rect x="70" width="20" height="70" fill="url(#irisSide)" />
    <rect y="70" width="70" height="20" fill="url(#irisFoot)" />
    <rect x="70" y="70" width="20" height="20" fill="#0a1250" />
    <text x="6" y="19" fontSize="15" fontWeight="700" fill="#1c2456">intel.</text>
    <text x="6" y="52" fontSize="23" fontWeight="700" fill="#1c2050">iRIS</text>
    <text x="49" y="52" fontSize="14" fontWeight="700" fill="#1e88dc">x</text>
    <text x="56" y="49" fontSize="12" fontWeight="700" fill="#1e88dc">e</text>
    <text x="7" y="83" fontSize="10" fontWeight="700" fill="#ffe8e0">GRAPHICS</text>
  </svg>
);

/* ---------- active clock popup ---------- */

const ClockPopup = styled.section`
  position: absolute;
  left: 58px;
  top: 44px;
  width: 267px;
  padding-bottom: 5px;
  border: 1px solid #bcbcbc;
  border-radius: 6px;
  background: #f0f0f0;
  box-shadow: 0 6px 12px rgba(0, 0, 0, 0.16);
`;

const ClockTable = styled.table`
  width: 100%;
  margin-top: 5px;
  border-collapse: collapse;
  font-size: 11px;
  line-height: 17px;
`;

const ClockTh = styled.th<{ $w?: number; $align?: string; $pr?: number }>`
  ${(p) => p.$w && css`width: ${p.$w}px;`}
  padding: 0 ${(p) => p.$pr ?? 0}px 0 0;
  font-weight: 400;
  text-align: ${(p) => p.$align ?? "right"};
`;

const ClockTd = styled.td<{ $color?: string; $pr?: number }>`
  height: 17px;
  padding: 0 ${(p) => p.$pr ?? 0}px 0 0;
  text-align: right;
  color: ${(p) => p.$color ?? "inherit"};
`;

const BarTrack = styled.div`
  width: 125px;
  height: 13px;
  margin-left: 5px;
  border: 1px solid #9c9c9c;
  background: #fff;
`;

const BarFill = styled.div`
  height: 11px;
  background: linear-gradient(90deg, #003c1e, #006400 20%, #00960a 50%, #00dc00 80%, #00e600);
`;

const ActiveClock = () => (
  <ClockPopup>
    <TitleBar $h={31} $pad={4}>
      <Title>CPU #0 - Active Clock</Title>
      <FadedClose aria-label="Close Active Clock">×</FadedClose>
    </TitleBar>
    <ClockTable>
      <thead>
        <tr>
          <ClockTh $w={35}>Core</ClockTh>
          <ClockTh $w={130} $align="center">Clock</ClockTh>
          <ClockTh>MHz</ClockTh>
          <ClockTh $w={60} $pr={9}>Ratio</ClockTh>
        </tr>
      </thead>
      <tbody>
        {[0, 1, 2, 3].map((n) => (
          <tr key={n}>
            <ClockTd $color={n === 1 ? "#e01030" : "#008c20"} $pr={1}>{n}</ClockTd>
            <ClockTd>
              <BarTrack>
                <BarFill style={{ width: `${(3193 / 5000) * 100}%` }} />
              </BarTrack>
            </ClockTd>
            <ClockTd>3193</ClockTd>
            <ClockTd $pr={9}>x32.00</ClockTd>
          </tr>
        ))}
      </tbody>
    </ClockTable>
  </ClockPopup>
);

const BootRow = styled.div`
  display: grid;
  grid-template-columns: 135px 86px 91px 49px 1fr;
  margin: 8px 0 3px 14px;
  white-space: nowrap;
`;

const Tint = styled.span<{ $c: string }>`
  color: ${(p) => p.$c};
`;

const OsSlot = styled.div`
  display: flex;
  margin: 0 10px 0 11px;
`;

const DriveName = styled.span`
  display: flex;
  align-items: center;
  gap: 2px;
`;

const Summary = () => (
  <ToolWindow>
    <TitleBar $h={30} $pad={3}>
      <Title>HWiNFO64 v7.15-4615 @ HONOR HGE-WX6 - System Summary</Title>
      <FadedClose aria-label="Close System Summary">×</FadedClose>
    </TitleBar>
    <SummaryBody>
      <Group $pad="0 4px 2px 4px">
        <Legend>CPU</Legend>
        <LogoRow $left={10} $gap={4}>
          <IntelCoreLogo />
          <div>
            <Line $pl={6}>
              <Field>Intel Core i7-11390H</Field>
              <Field $w={72} $ml={38}>10 nm</Field>
            </Line>
            <Line $mt={2}>
              <Label $w={72}>Stepping</Label>
              <Field>C0</Field>
              <Label $w={38} $pad={7}>TDP</Label>
              <Field $w={72}>35 W</Field>
            </Line>
            <Line $mt={2}>
              <Label $w={72}>Codename</Label>
              <Field>Tiger Lake-H35 Refresh</Field>
              <Label $w={38} $pad={7}>MCU</Label>
              <Field $w={72}>22</Field>
            </Line>
            <Line $mt={4}>
              <Label $w={72}>SSPEC</Label>
              <Field>SRKSL, SRKUL</Field>
              <Field $w={107} $ml={3}>Prod. Unit</Field>
            </Line>
          </div>
        </LogoRow>
        <Line $mt={4} $pl={5}>
          <DropDown label="Processor" value="CPU #0" w={86} />
          <Label $w={85}>Platform</Label>
          <Field>BGA1449</Field>
        </Line>
        <CacheGrid>
          <Label $w={42} $align="left">Cores</Label>
          <Field>4 / 8</Field>
          <Label $w={67}>Cache L1</Label>
          <Field>4x32 + 4x48</Field>
          <Label $w={31}>L2</Label>
          <Field>4x1.25M</Field>
          <LevelLabels>
            L3
            <br />
            L4
          </LevelLabels>
          <L3Slot>
            <Field $h={52}>12M</Field>
          </L3Slot>
          <span />
          <Field $dim>-</Field>
          <span />
          <Field $dim>-</Field>
          <span />
          <Field $dim>-</Field>
        </CacheGrid>
        <Group $mt={4} $pad="5px 0 4px 4px">
          <Legend>Features</Legend>
          <FeatureGrid>
            {features.map((f, i) => (
              <Feature key={i} $on={!f.startsWith("-")}>
                {f.replace(/^-/, "")}
              </Feature>
            ))}
          </FeatureGrid>
        </Group>
        <ListBox $mt={10}>
          <PlainTable>
            <colgroup>
              <Col />
              <Col $w={96} />
              <Col $w={61} />
              <Col $w={89} />
              <Col $w={73} />
            </colgroup>
            <thead>
              <tr>
                {["Operating Point", "Clock", "Ratio", "Bus", "VID"].map((h, i) => (
                  <PlainHead key={h} $align={i ? "right" : "left"}>
                    {h}
                  </PlainHead>
                ))}
              </tr>
            </thead>
            <tbody>
              {operatingPoints.map((r) => (
                <tr key={r[0]}>
                  {r.map((c, i) => (
                    <PlainCell key={i} $align={i ? "right" : "left"}>
                      {c}
                    </PlainCell>
                  ))}
                </tr>
              ))}
            </tbody>
          </PlainTable>
        </ListBox>
      </Group>

      <Column>
        <Group $pad="4px 7px 6px 8px">
          <Legend $out>Motherboard</Legend>
          <Line>
            <Field>HONOR HGE-WX6-PCB</Field>
          </Line>
          <Line $mt={2}>
            <Label $w={77} $align="left" $pad={12}>Chipset</Label>
            <Field>Intel Tiger Lake-UP3 PCH-LP</Field>
          </Line>
          <Line $mt={4}>
            <Label $w={77} $align="left" $pad={12}>BIOS Date</Label>
            <Field $w={80}>09/24/2021</Field>
            <Label $w={56} $align="center">Version</Label>
            <Field $w={123}>1.03</Field>
            <Label $w={50} $align="left" $pad={8} $color={GREEN}>UEFI</Label>
          </Line>
        </Group>
        <Group $mt={5} $pad="2px 7px 10px 8px">
          <Legend $out>Memory</Legend>
          <Line>
            <Label $w={63} $pad={12}>Size</Label>
            <Field $w={87}>16 GB</Field>
            <Label $w={88} $pad={10}>Type</Label>
            <Field>LPDDR4 SDRAM</Field>
          </Line>
          <Line $mt={2}>
            <Label $w={63} $pad={12}>Clock</Label>
            <Field $w={87}>2128.6 MHz</Field>
            <Label $w={32} $align="center">=</Label>
            <Field $w={53}>21.33</Field>
            <Label $w={36} $align="center">x</Label>
            <Field $w={87}>99.8 MHz</Field>
          </Line>
          <Line $mt={4}>
            <Label $w={63} $pad={12}>Mode</Label>
            <Field>Quad-Channel</Field>
            <Label $w={48} $pad={10}>CR</Label>
            <Field $w={34}>1T</Field>
          </Line>
          <Line $mt={4}>
            <Label $w={63} $pad={12}>Timing</Label>
            <Field $w={31}>36</Field>
            <Label $w={20} $align="center">-</Label>
            <Field $w={30}>39</Field>
            <Label $w={20} $align="center">-</Label>
            <Field $w={30}>39</Field>
            <Label $w={20} $align="center">-</Label>
            <Field $w={30}>90</Field>
            <Label $w={38} $pad={12}>tRC</Label>
            <Field $w={31}>129</Field>
            <Label $w={46} $pad={9}>tRFC</Label>
            <Field>598</Field>
          </Line>
        </Group>
        <Group $mt={5} $pad="6px 6px 2px 8px" $grow>
          <Legend $out>Memory Modules</Legend>
          <Line>
            <DropDown label="Module" value="" />
          </Line>
          <Line $mt={6}>
            <Label $w={47} $pad={10}>Size</Label>
            <Field $w={87} />
            <Label $w={76} $pad={10}>Clock</Label>
            <Field $w={81} />
            <Label $w={73} $pad={10}>ECC</Label>
            <Field />
          </Line>
          <Line $mt={4}>
            <Label $w={47} $pad={10}>Type</Label>
            <Field />
          </Line>
          <ListBox $mt={4}>
            <PlainTable>
              <colgroup>
                <Col $w={53} />
                <Col $w={38} />
                <Col $w={53} />
                <Col $w={40} />
                <Col $w={50} />
                <Col $w={42} />
                <Col $w={48} />
                <Col $w={44} />
                <Col />
              </colgroup>
              <thead>
                <tr>
                  {["Freq", "CL", "RCD", "RP", "RAS", "RC", "Ext.", "V", ""].map((h, i) => (
                    <PlainHead key={i} $align={i ? "center" : "left"} $open={i === 8}>
                      {h}
                    </PlainHead>
                  ))}
                </tr>
              </thead>
            </PlainTable>
            <ActiveClock />
          </ListBox>
        </Group>
      </Column>

      <Column>
        <Group $pad="0 4px 5px 8px" $mr={4}>
          <Legend $out>GPU</Legend>
          <LogoRow $left={7} $gap={9}>
            <IrisLogo />
            <div>
              <Line $pr={2}>
                <Field>Intel Tiger Lake-UP3 - GT2 Integrated Graphics []</Field>
              </Line>
              <Line $mt={2} $pr={2}>
                <Field>Intel Iris Xe Graphics</Field>
              </Line>
              <Line $mt={4} $pr={2}>
                <Field>Tiger Lake-UP3 GT2</Field>
              </Line>
              <Line $mt={2} $pr={2}>
                <Field>PCIe v2.0 x0 (5.0 GT/s) @ [DISABLED]</Field>
              </Line>
            </div>
          </LogoRow>
          <Line $mt={4} $pl={2} $pr={2}>
            <DropDown label="Adapter" value="GPU #0" w={87} />
            <Field $w={74} $ml={17}>1 GB</Field>
            <Field $w={130} $ml={9}>LPDDR4</Field>
            <Field $ml={9}>128-bit</Field>
          </Line>
          <Line $mt={2} $pr={2}>
            <Label $w={106} $pad={10}>EUs</Label>
            <Field $w={74}>96</Field>
            <Label $w={94} $pad={10}>ALUs</Label>
            <Field>768</Field>
          </Line>
          <Group $mt={10} $pad="6px 14px 8px 8px">
            <Legend $out>Current Clocks (MHz)</Legend>
            <Line>
              <Label $w={48}>GPU</Label>
              <Field $w={64}>99.8</Field>
              <Label $w={74} $pad={5}>Memory</Label>
              <Field $w={69}>2128.0</Field>
              <Label $w={75} $off>Shader</Label>
              <Field>-</Field>
            </Line>
          </Group>
        </Group>
        <BootRow>
          <span>Operating System</span>
          <Tint $c={GREEN}>UEFI Boot</Tint>
          <Tint $c={GREEN}>Secure Boot</Tint>
          <Tint $c={GREEN}>TPM</Tint>
          <Tint $c="#8c8c8c">HVCI</Tint>
        </BootRow>
        <OsSlot>
          <Field $h={46}>Microsoft Windows 11 Home (x64) Build 22000.348</Field>
        </OsSlot>
        <Group $mt={10} $ml={2} $pad="10px 6px 2px 4px" $grow>
          <Legend>Drives</Legend>
          <ListBox $mt={0}>
            <PlainTable>
              <colgroup>
                <Col $w={175} />
                <Col />
              </colgroup>
              <thead>
                <tr>
                  <PlainHead $align="left">Interface</PlainHead>
                  <PlainHead $align="left">Model [Capacity]</PlainHead>
                </tr>
              </thead>
              <tbody>
                <tr>
                  <PlainCell $align="left">
                    <DriveName>
                      <svg width="12" height="12" viewBox="0 0 12 12">
                        <circle cx="6" cy="6" r="5.500" fill="#5cb82c" />
                        <path d="M3 6l2.300 2.300L9.300 4" fill="none" stroke="#fff" strokeWidth="1.800" />
                      </svg>
                      NVMe 4x 8.0 GT/s
                    </DriveName>
                  </PlainCell>
                  <PlainCell $align="left">KXG60ZNV512G TOSHIBA [512 GB]</PlainCell>
                </tr>
              </tbody>
            </PlainTable>
          </ListBox>
        </Group>
      </Column>
    </SummaryBody>
  </ToolWindow>
);

/* ---------- graphs ---------- */

const GraphBody = styled.div`
  display: grid;
  grid-template-columns: minmax(0, 1fr) 106px;
  height: 203px;
`;

const Plot = styled.div`
  position: relative;
  border: 1px solid #9a9fa4;
  background: #dff6ff;
  > svg { display: block; width: 100%; height: 201px; }
`;

const GraphPanel = styled.div`
  padding-left: 4px;
`;

const boxed = css`
  display: block;
  width: 90px;
  height: 21px;
  padding: 0 4px;
  border: 1px solid #dedede;
  border-bottom-color: #868686;
  border-radius: 2px;
  background: #f1f1f1;
  line-height: 20px;
`;
const ScaleInput = styled.input`
  ${boxed}
`;
const Reading = styled.output`
  ${boxed}
  margin-top: 6px;
`;

const SwatchRow = styled.div`
  display: flex;
  gap: 12px;
  padding: 56px 0 0 7px;
`;

const Swatch = styled.button<{ $fill: string; $line: string }>`
  width: 16px;
  height: 16px;
  border: 1px solid ${(p) => p.$line};
  border-radius: 4px;
  background: ${(p) => p.$fill};
  box-shadow: inset 0 0 0 1px ${(p) => (p.$line === "#0067c0" ? "#fff" : "#e0e0e0")};
`;

const PanelButtons = styled.div`
  display: flex;
  gap: 2px;
  margin: 22px 0 13px;
`;

const PanelButton = styled.button<{ $w: number }>`
  width: ${(p) => p.$w}px;
  height: 26px;
  border: 1px solid #cfcfcf;
  border-bottom-color: #bdbdbd;
  border-radius: 4px;
  background: #fcfcfc;
  white-space: nowrap;
`;

const Tip = styled.div`
  position: absolute;
  top: 50px;
  right: 3px;
  width: 98px;
  padding: 2px 5px;
  border: 1px solid #e4e4e4;
  border-radius: 3px;
  background: #fbfbfb;
  box-shadow: 3px 3px 2px rgba(0, 0, 0, 0.5);
  color: #5a5a5a;
  font-size: 14px;
  line-height: 20px;
  white-space: nowrap;
`;

/* Turns a resting level plus "start-end:level" runs into a stepped trace. */
type Level = [number, number];
const traceFrom = (bases: Level[], runs: string): Level[] => {
  const at = (x: number) => bases.reduce((y, b) => (b[0] <= x ? b[1] : y), bases[0][1]);
  const marks: Level[] = [...bases];
  runs.split(" ").filter(Boolean).forEach((r) => {
    const [range, y] = r.split(":");
    const [a, b] = range.split("-").map(Number);
    marks.push([a, Number(y)], [b, at(b)]);
  });
  return marks.sort((p, q) => p[0] - q[0]);
};
const toPath = (steps: Level[], end: number) =>
  steps.reduce((d, [x, y], i) => (i ? `${d}H${x}V${y}` : `M0 ${y}`), "") + `H${end}`;

const clockTrace = traceFrom(
  [[0, 49], [6, 55], [12, 58], [22, 62], [57, 67], [123, 70]],
  "39-43:67 45-49:67 79-82:62 131-135:67 139-142:67 145-162:67 166-169:67 172-175:67 178-189:67 193-197:71 197-213:67 217-222:67 226-228:67 228-238:69 238-241:67 250-256:67 286-289:67 298-301:67 308-310:67 310-313:62 319-325:67 341-345:67 349-355:67 370-373:67 394-397:67 451-454:67 463-466:68 466-469:65 478-490:68 503-506:67 520-523:67 548-554:67 571-574:67 592-595:67 612-615:65 640-643:62 688-691:67 724-727:67 781-784:67 808-811:75 853-856:75 868-871:75 891-896:75 936-941:75 951-956:75 1039-1044:75 1053-1058:75 1074-1079:75 1080-1088:76 1209-1219:75"
);
const coreTrace = traceFrom(
  [[0, 3], [1, 6]],
  "3-8:10 18-22:10 22-25:3 34-37:3 58-61:3 70-73:3 78-82:10 85-88:3 93-98:10 118-124:10 124-127:3 181-183:3 183-188:10 192-196:10 205-208:3 219-224:10 229-232:3 237-245:10 255-259:10 262-265:3 268-271:3 273-280:10 285-290:10 292-295:3 299-303:10 310-314:15 316-319:1 325-329:10 329-331:3 337-343:3 346-349:3 354-359:10 367-371:10 373-376:3 406-410:10 427-430:3 433-436:3 438-443:10 450-455:15 493-498:10 512-515:3 526-531:10 540-543:3 552-557:10 566-569:3 590-595:10 604-607:3 622-625:3 633-638:10 652-655:3 661-666:10 676-679:3 690-694:10 700-708:3 722-727:10 734-737:3 748-753:10 767-770:3 776-779:3 790-795:10 811-814:3 826-831:10 845-848:3 856-862:10 875-878:3 892-895:3 903-908:10 910-913:3 931-934:3 937-940:3 946-949:3 952-955:3 955-958:10 972-977:10 987-991:10 991-994:3 1020-1025:10 1036-1039:3 1045-1048:3 1062-1067:10 1074-1079:10 1081-1087:3 1089-1094:10 1114-1117:3 1123-1126:3 1132-1135:3 1137-1142:10 1144-1147:3 1155-1160:11 1180-1183:3 1198-1201:3 1209-1216:10"
);
const powerTrace = traceFrom(
  [
    [0, 74], [3, 77], [6, 81], [9, 86], [12, 88], [15, 91], [21, 95], [24, 97], [27, 98], [30, 100], [38, 101],
    [45, 102], [57, 103], [60, 104], [69, 105], [84, 106], [105, 107], [134, 108], [233, 109], [273, 110],
    [354, 111], [455, 112],
  ],
  "91-95:105 110-112:106 115-117:106 139-155:107 159-161:107 190-193:107 205-208:107 240-245:108 276-290:109 295-297:109 318-324:109 340-342:109 361-378:110 388-408:110 418-421:110 427-435:110 465-468:111 480-490:111 520-523:111 548-551:111 580-583:111 622-625:111 650-652:113 701-704:111 760-764:113 786-788:113 820-830:113 850-853:110 860-864:113 886-890:113 895-899:113 904-906:110 908-918:113 1034-1042:113 1190-1196:113 1200-1204:113 1211-1219:113"
);
const driveTrace: Level[] = [[0, 185], [163, 182], [463, 178], [764, 174]];

type GraphSpec = {
  title: string;
  top: string;
  bottom: string;
  value: string;
  line: string;
  fill: string;
  shift: number;
  trace: Level[];
  tip?: [string, string];
};

const graphs: GraphSpec[] = [
  { title: "Core 1 Clock", top: "5000.0", bottom: "0.0", value: "3,192.9 MHz", line: "#00844a", fill: "#96b0a5", shift: 5, trace: clockTrace, tip: ["3,292.9 MHz", "22:12:12"] },
  { title: "Core 1", top: "100", bottom: "25", value: "98 °C", line: "#ff0080", fill: "#ff96b0", shift: 15, trace: coreTrace },
  { title: "CPU Package Power", top: "75.000", bottom: "0.000", value: "33.174 W", line: "#000", fill: "#969696", shift: 15, trace: powerTrace },
  { title: "Drive Temperature", top: "100", bottom: "25", value: "35 °C", line: "#8000ff", fill: "#b096ff", shift: 5, trace: driveTrace },
];

const Graph = ({ g, id }: { g: GraphSpec; id: string }) => {
  const d = toPath(g.trace, 1219);
  return (
    <ToolWindow>
      <TitleBar $h={37} $pad={9}>
        <Title>{g.title}</Title>
        <FadedClose aria-label={`Close ${g.title}`}>×</FadedClose>
      </TitleBar>
      <GraphBody>
        <Plot>
          <svg viewBox="0 1 1219 201" preserveAspectRatio="none" shapeRendering="crispEdges">
            <defs>
              <pattern id={id} x={g.shift} y="0" width="20" height="20" patternUnits="userSpaceOnUse">
                <path d="M.5 0v20M0 .5h20" stroke="#a8c3e8" />
              </pattern>
            </defs>
            <path d={`${d}V203H0z`} fill={g.fill} />
            <rect y="1" width="1219" height="202" fill={`url(#${id})`} />
            <path d={d} transform="translate(0 .5)" fill="none" stroke={g.line} />
            {g.tip && <path d="M1104.500 75.500h15M1112.500 67.500v15" stroke="#404848" />}
          </svg>
          {g.tip && (
            <Tip role="tooltip">
              {g.tip[0]}
              <br />
              {g.tip[1]}
            </Tip>
          )}
        </Plot>
        <GraphPanel>
          <ScaleInput aria-label={`${g.title} maximum`} defaultValue={g.top} />
          <SwatchRow>
            <Swatch aria-label="Line colour" $fill="#fcf8fc" $line="#0067c0" />
            <Swatch aria-label="Background colour" $fill="#dff6ff" $line="#c4c4c4" />
            <Swatch aria-label="Grid colour" $fill="#a8c3e8" $line="#c4c4c4" />
          </SwatchRow>
          <Reading>{g.value}</Reading>
          <PanelButtons>
            <PanelButton $w={51}>Auto Fit</PanelButton>
            <PanelButton $w={38}>Reset</PanelButton>
          </PanelButtons>
          <ScaleInput aria-label={`${g.title} minimum`} defaultValue={g.bottom} />
        </GraphPanel>
      </GraphBody>
    </ToolWindow>
  );
};

const AppLogo = () => (
  <svg width="18" height="18" viewBox="0 0 18 18">
    <rect width="18" height="18" rx="2" fill="#1c2a38" />
    <rect x="1" y="1" width="16" height="9" fill="#3a80b8" />
    <path d="M4 9V3M8 9V6M11 9V3M14 9V6" stroke="#fff" strokeWidth="2" />
    <path d="M5 16v-4M9 16v-4M13 16v-4" stroke="#fff" strokeWidth="2" />
  </svg>
);

export default function App() {
  return (
    <>
      <GlobalStyle />
      <Desktop>
        <SensorWindow>
          <TitleBar $h={37} $pad={10}>
            <TitleIcon>
              <AppLogo />
            </TitleIcon>
            <Title>HWiNFO64 v7.15-4615 Sensor Status [12 values hidden]</Title>
            <Caption $w={58} aria-label="Minimize sensors">
              <CaptionGlyph kind="min" color="#8c8c8c" />
            </Caption>
            <Caption $w={58} aria-label="Maximize sensors">
              <CaptionGlyph kind="max" color="#8c8c8c" />
            </Caption>
            <Caption $w={58} aria-label="Close sensors">
              <CaptionGlyph kind="close" color="#8c8c8c" />
            </Caption>
          </TitleBar>
          <TablePair>
            <TableBox>
              <SensorList rows={leftRows} headHeight={25} used={leftRows.length} />
            </TableBox>
            <TableBox>
              <SensorList rows={paddedRightRows} headHeight={24} used={contentLength} />
            </TableBox>
          </TablePair>
          <Toolbar>
            <ToolButton aria-label="Expand columns">
              <ArrowsOut />
            </ToolButton>
            <ToolButton aria-label="Shrink columns" $ml={2}>
              <ArrowsIn />
            </ToolButton>
            <Spring />
            <ToolButton aria-label="System summary">
              <SearchScreen />
            </ToolButton>
            <ToolButton aria-label="Remote monitoring" $ml={13}>
              <LinkedScreens />
            </ToolButton>
            <Uptime>0:19:39</Uptime>
            <ToolButton aria-label="Reset timers">
              <ClockFace />
            </ToolButton>
            <ToolButton aria-label="Start logging" $ml={4}>
              <SheetPlus />
            </ToolButton>
            <ToolButton aria-label="Settings" $ml={5}>
              <Gear />
            </ToolButton>
            <ToolButton aria-label="Close sensors window" $ml={5}>
              <BlueCross />
            </ToolButton>
          </Toolbar>
          <PowerMax />
        </SensorWindow>
        <RightColumn>
          <Summary />
          {graphs.map((g, i) => (
            <Graph key={g.title} g={g} id={`grid${i}`} />
          ))}
        </RightColumn>
      </Desktop>
    </>
  );
}
